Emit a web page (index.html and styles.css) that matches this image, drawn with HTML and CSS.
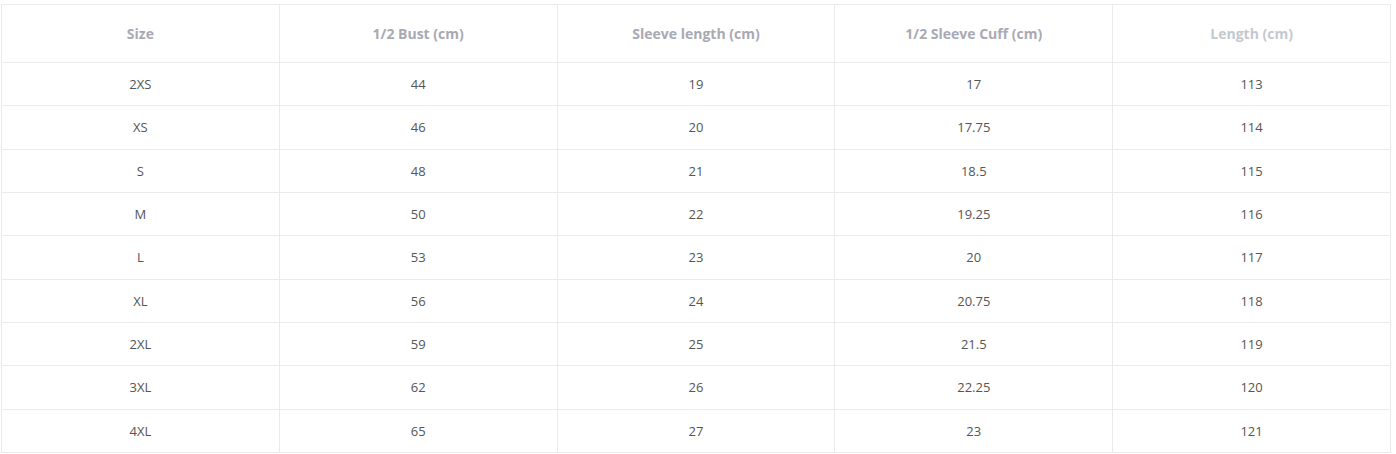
FILE: index.html
```html
<!DOCTYPE html>
<html>
<head>
<meta charset="utf-8">
<link rel="stylesheet" href="styles.css">
</head>
<body>
<table class="size-table">
  <thead>
    <tr class="head-row">
      <th>Size</th>
      <th>1/2 Bust (cm)</th>
      <th>Sleeve length (cm)</th>
      <th>1/2 Sleeve Cuff (cm)</th>
      <th class="faded">Length (cm)</th>
    </tr>
  </thead>
  <tbody>
    <tr><td>2XS</td><td>44</td><td>19</td><td>17</td><td>113</td></tr>
    <tr><td>XS</td><td>46</td><td>20</td><td>17.75</td><td>114</td></tr>
    <tr><td>S</td><td>48</td><td>21</td><td>18.5</td><td>115</td></tr>
    <tr><td>M</td><td>50</td><td>22</td><td>19.25</td><td>116</td></tr>
    <tr><td>L</td><td>53</td><td>23</td><td>20</td><td>117</td></tr>
    <tr><td>XL</td><td>56</td><td>24</td><td>20.75</td><td>118</td></tr>
    <tr><td>2XL</td><td>59</td><td>25</td><td>21.5</td><td>119</td></tr>
    <tr><td>3XL</td><td>62</td><td>26</td><td>22.25</td><td>120</td></tr>
    <tr><td>4XL</td><td>65</td><td>27</td><td>23</td><td>121</td></tr>
  </tbody>
</table>
</body>
</html>
```
FILE: styles.css
```css
html, body {
  margin: 0;
  padding: 0;
  background: #ffffff;
}
body {
  padding: 4px 0 0 1px;
  font-family: "Open Sans", "Noto Sans", sans-serif;
}
.size-table {
  width: 1390px;
  border-collapse: collapse;
  table-layout: fixed;
}
.size-table th,
.size-table td {
  border: 1px solid #e9ebeb;
  text-align: center;
  padding: 0;
}
.head-row th {
  height: 57px;
  font-size: 14px;
  font-weight: 700;
  color: #a9a9b4;
  padding-bottom: 0;
}
.head-row th.faded {
  color: #c4c8d0;
}
.size-table td {
  height: 42.33px;
  font-size: 13px;
  color: #555555;
}
```
